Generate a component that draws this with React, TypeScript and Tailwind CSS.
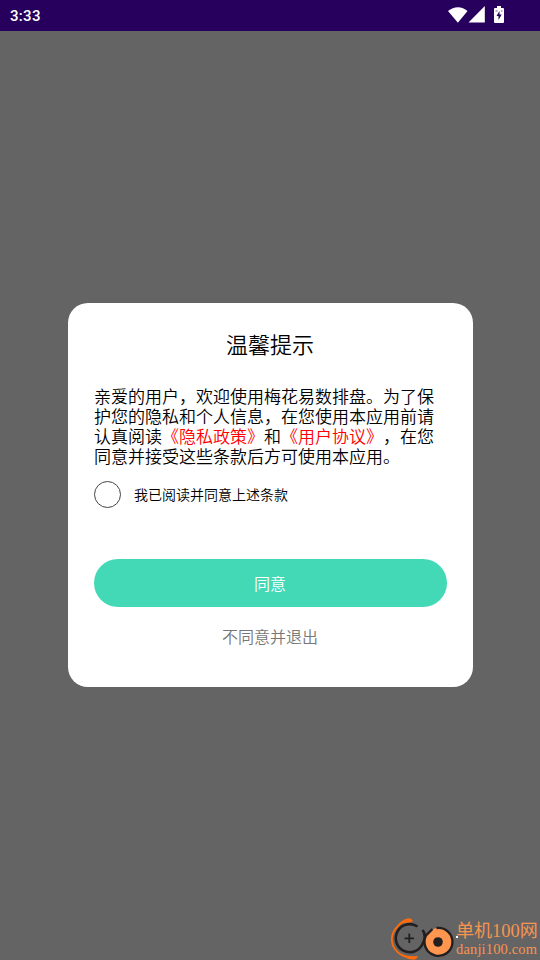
import React from "react";

function StatusBar() {
  return (
    <header className="flex h-[31px] items-center justify-between bg-[#27005d] pl-[10px] pr-[35px] text-white">
      <span className="pt-px font-['Roboto',sans-serif] text-[15px] font-medium leading-none tracking-[0.3px]">3:33</span>
      <div className="flex items-center pb-[2px]">
        <svg width="20" height="16" viewBox="0 0 20 16" fill="#fff">
          <path d="M0 4.100C6-1.200 14-1.200 19.500 4.100L9.900 15.800Z" />
        </svg>
        <svg width="18" height="17" viewBox="0 0 18 17" fill="#fff">
          <path d="M.5 16.500 16.800 0V16.500Z" />
        </svg>
        <svg className="ml-[7px]" width="12" height="18" viewBox="0 0 12 18">
          <path d="M4 0h4v2h2q1 0 1 1V16q0 1-1 1H2q-1 0-1-1V3q0-1 1-1h2Z" fill="#fff" />
          <path d="M6.500 5 3.500 10H5.500V14L8.700 8.500H6.500Z" fill="#27005d" />
          <path d="M2.500 4h2v2h-2ZM8 4h1.500v2H8Z" fill="#b9a9cc" />
        </svg>
      </div>
    </header>
  );
}

function Watermark() {
  return (
    <div className="absolute bottom-0 right-0 flex h-[45px] w-[152px] font-normal text-[#f79450]">
      <svg className="shrink-0" width="68" height="45" viewBox="388 915 68 45" fill="none">
        <path d="M412 920.500C405 918 401 922 398 926C389 935 390 947 400 954C405 957 411 960 417 957.500" stroke="#ff6b0b" strokeWidth="1.800" />
        <path d="M399 925Q404 917.500 410 918.300L413 921L410 922.500Q404 922 399 925ZM401 953.500Q407 957 418 956L415 959.500Q407 960 401 953.500Z" fill="#ff6b0b" />
        <path d="M417.500 926.500A14 14 0 1 0 422.500 944C425 940 426 934 422.500 930" stroke="#231f20" strokeWidth="2.600" />
        <path d="M409.300 933.500v9.500M404.500 938.300h9.500" stroke="#231f20" strokeWidth="1.800" />
        <circle cx="438.500" cy="942" r="14" fill="#ff9650" />
        <path d="M436.500 928A14 14 0 1 1 426 935.500L432.500 929" stroke="#231f20" strokeWidth="2.400" />
        <circle cx="438" cy="942" r="4.800" fill="#231f20" />
      </svg>
      <div className="flex flex-col whitespace-nowrap pt-[5px]">
        <span className="h-[22px] font-['Liberation_Serif','Noto_Sans_CJK_SC',serif] text-[18px] leading-[22px]">单机<span className="text-[18.500px]">100</span>网</span>
        <span className="h-[15px] font-['Liberation_Serif',serif] text-[14.500px] leading-[15px] tracking-[0.15px]">danji100.com</span>
        <span className="absolute left-[68px] top-[21px] size-[2px] bg-white" />
      </div>
    </div>
  );
}

export default function App() {
  return (
    <div className="relative flex h-[960px] w-[540px] flex-col overflow-hidden bg-[#646464] font-['Noto_Sans_CJK_SC',sans-serif] font-[350] [text-spacing-trim:space-all]">
      <StatusBar />
      <main className="flex flex-1 justify-center pt-[272px]">
        <section className="ml-px flex h-[384px] w-[405px] flex-col rounded-[20px] bg-white px-[26px] text-black">
          <h1 className="mt-[24px] pr-px text-center text-[22px] font-[350] leading-[32px]">温馨提示</h1>
          <p className="mt-[27px] w-[342px] text-[17px] leading-[20px]">
            亲爱的用户，欢迎使用梅花易数排盘。为了保<br />
            护您的隐私和个人信息，在您使用本应用前请<br />
            认真阅读<a className="text-[#ff0000]">《隐私政策》</a>和<a className="text-[#ff0000]">《用户协议》</a>，在您<br />
            同意并接受这些条款后方可使用本应用。
          </p>
          <label className="mt-[15px] flex h-[27px] items-center gap-[13px] text-[14px]">
            <span className="size-[27px] rounded-full border border-[#444]" />
            我已阅读并同意上述条款
          </label>
          <button className="mt-[51px] h-[48px] rounded-full bg-[#44d9b6] pb-px pr-px text-[16px] text-white">同意</button>
          <button className="mt-[17px] h-[24px] pr-px text-[16px] leading-[24px] text-[#777]">不同意并退出</button>
        </section>
      </main>
      <Watermark />
    </div>
  );
}
